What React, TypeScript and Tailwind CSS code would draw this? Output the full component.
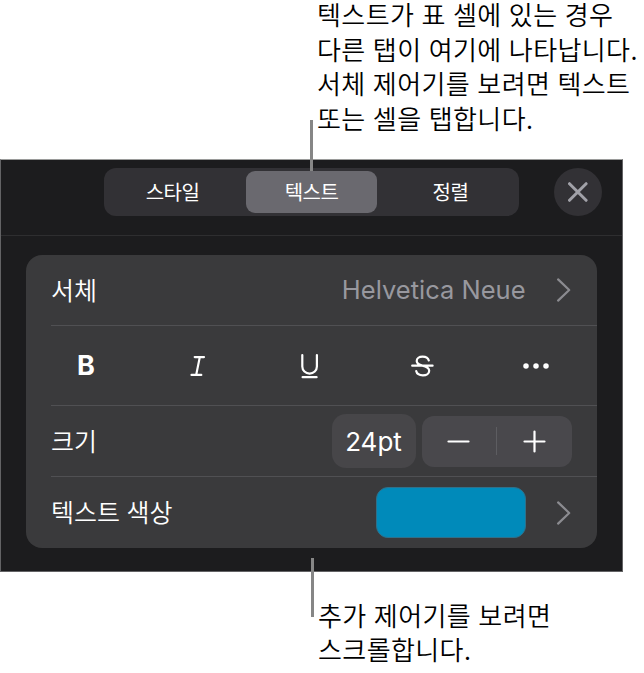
import { ReactNode } from "react";

const segments = [
  { label: "스타일", width: "w-[137px]" },
  { label: "텍스트", width: "w-[131px]", active: true },
  { label: "정렬", width: "w-[137px]" },
];

function Chevron() {
  return (
    <svg className="mr-px" width="15" height="24" viewBox="0 0 15 24" fill="none" stroke="#8b8b90" strokeWidth="2.2" strokeLinecap="round" strokeLinejoin="round">
      <path d="M2.1 1.4 13.2 12 2.1 22.6" />
    </svg>
  );
}

function FormatButton({ label, children }: { label: string; children: ReactNode }) {
  return (
    <button aria-label={label} className="flex w-[112px] items-center justify-center last:w-[115px]">
      {children}
    </button>
  );
}

function Row({ height, label, children }: { height: string; label: string; children: ReactNode }) {
  return (
    <div className={`flex items-center justify-between border-b border-[#505053] pr-[25.5px] last:border-b-0 ${height}`}>
      <span className="whitespace-nowrap pb-0.5 text-[25px] font-[350] leading-none [word-spacing:1px]">{label}</span>
      {children}
    </div>
  );
}

export default function App() {
  return (
    <div className="relative h-[673px] w-[644px] bg-white font-['Noto_Sans_CJK_KR',sans-serif] text-black">
      <div className="flex h-[159px] flex-col whitespace-nowrap pl-[317px] text-[26px] font-[350] leading-[34.5px] tracking-[0.4px] [word-spacing:1px]">
        <p className="-mt-[3px]">텍스트가 표 셀에 있는 경우</p>
        <p>다른 탭이 여기에 나타납니다.</p>
        <p>서체 제어기를 보려면 텍스트</p>
        <p>또는 셀을 탭합니다.</p>
      </div>

      <div className="h-[413px] w-[623px] border border-[#636365] border-t-[#9a9b9a] bg-[#1c1c1e] text-white">
        <div className="flex h-[76px] items-start border-b border-[#2e2e30] pl-[103px] pr-5 pt-2">
          <div className="flex h-[48px] w-[415px] items-center justify-center gap-[5px] rounded-[12px] bg-[#323135]">
            {segments.map((s) => (
              <button
                key={s.label}
                className={`h-[42px] rounded-[9px] text-[20px] font-normal leading-[38px] tracking-[-0.5px] ${s.width} ${s.active ? "bg-[#6a696f]" : ""}`}
              >
                {s.label}
              </button>
            ))}
          </div>
          <button aria-label="닫기" className="ml-auto flex size-[48px] items-center justify-center rounded-full bg-[#323135]">
            <svg width="20" height="20" viewBox="0 0 20 20" stroke="#a1a1a8" strokeWidth="3" strokeLinecap="round">
              <path d="m1.5 1.7 16.6 16.6M18.1 1.7 1.5 18.3" />
            </svg>
          </button>
        </div>

        <div className="ml-[24.5px] mt-[19px] h-[293px] w-[571.5px] rounded-[16px] bg-[#3a3a3c] pl-[25.5px]">
          <Row height="h-[71px]" label="서체">
            <div className="flex items-center gap-[30px] font-[Inter,sans-serif] text-[25.5px] text-[#98989f]">
              <span className="pt-px">Helvetica Neue</span>
              <Chevron />
            </div>
          </Row>

          <div className="flex h-[80px] border-b border-[#505053]">
            <div className="-ml-[21px] flex">
              <FormatButton label="굵게">
                <span className="font-[Inter,sans-serif] text-[27px] font-bold leading-none">B</span>
              </FormatButton>
              <FormatButton label="이탤릭">
                <svg width="16" height="20" viewBox="0 0 16 20" fill="none" stroke="white" strokeWidth="2.2" strokeLinecap="round">
                  <path d="M4.7 1.1H14M1.5 18.9h9.8M9.8 1.1 6.2 18.9" />
                </svg>
              </FormatButton>
              <FormatButton label="밑줄">
                <svg width="18" height="26" viewBox="0 0 18 26" fill="none" stroke="white" strokeWidth="2.2" strokeLinecap="round">
                  <path d="M1.3 2v11.6a7.3 7 0 0 0 14.6 0V2M1.6 24.2h14" />
                </svg>
              </FormatButton>
              <FormatButton label="취소선">
                <svg width="23" height="22" viewBox="0 0 23 22" fill="none" stroke="white" strokeWidth="2.2" strokeLinecap="round">
                  <path d="M1.2 10.7h20.4M17.8 5.5C17.2 3.1 14.8 1.6 11.6 1.6 8.1 1.6 5.7 3.4 5.7 6c0 2.4 1.8 3.6 5.7 4.6 4.5 1.1 6.8 2.2 6.8 5.1 0 2.8-2.6 4.7-6.3 4.7-3.6 0-6.1-1.6-6.7-4.3" />
                </svg>
              </FormatButton>
              <FormatButton label="더 보기">
                <svg width="26" height="6" viewBox="0 0 26 6" fill="white">
                  <circle cx="3" cy="3" r="2.75" />
                  <circle cx="13" cy="3" r="2.75" />
                  <circle cx="23" cy="3" r="2.75" />
                </svg>
              </FormatButton>
            </div>
          </div>

          <Row height="h-[71px]" label="크기">
            <div className="flex items-center gap-1.5">
              <span className="flex h-[54px] w-[84px] items-center justify-center rounded-[14px] bg-[#474649] font-[Inter,sans-serif] text-[26px]">
                24pt
              </span>
              <div className="flex h-[51px] w-[150px] items-center rounded-[12px] bg-[#49484c]">
                <button aria-label="줄이기" className="flex w-[74.5px] justify-center">
                  <svg width="23" height="23" viewBox="0 0 23 23" stroke="white" strokeWidth="2.2" strokeLinecap="round">
                    <path d="M1.5 11.5h20" />
                  </svg>
                </button>
                <span className="h-[28px] w-px bg-[#5d5d61]" />
                <button aria-label="늘리기" className="flex w-[74.5px] justify-center">
                  <svg width="23" height="23" viewBox="0 0 23 23" stroke="white" strokeWidth="2.2" strokeLinecap="round">
                    <path d="M1.5 11.5h20M11.5 1.5v20" />
                  </svg>
                </button>
              </div>
            </div>
          </Row>

          <Row height="h-[71px]" label="텍스트 색상">
            <div className="flex items-center gap-[30px]">
              <div className="h-[51px] w-[150px] rounded-[12px] border border-[#2f708a] bg-[#008aba]" />
              <Chevron />
            </div>
          </Row>
        </div>
      </div>

      <div className="mt-[26px] whitespace-nowrap pl-[318px] text-[26px] font-[350] leading-[34.4px] tracking-[0.4px] [word-spacing:1px]">
        <p>추가 제어기를 보려면</p>
        <p>스크롤합니다.</p>
      </div>

      {/* callout leader lines over the panel edges */}
      <div className="absolute left-[310px] top-[120px] h-[51px] w-[3px] bg-[#868686]" />
      <div className="absolute left-[311px] top-[558px] h-[59px] w-[3px] bg-[#868686]" />
    </div>
  );
}
